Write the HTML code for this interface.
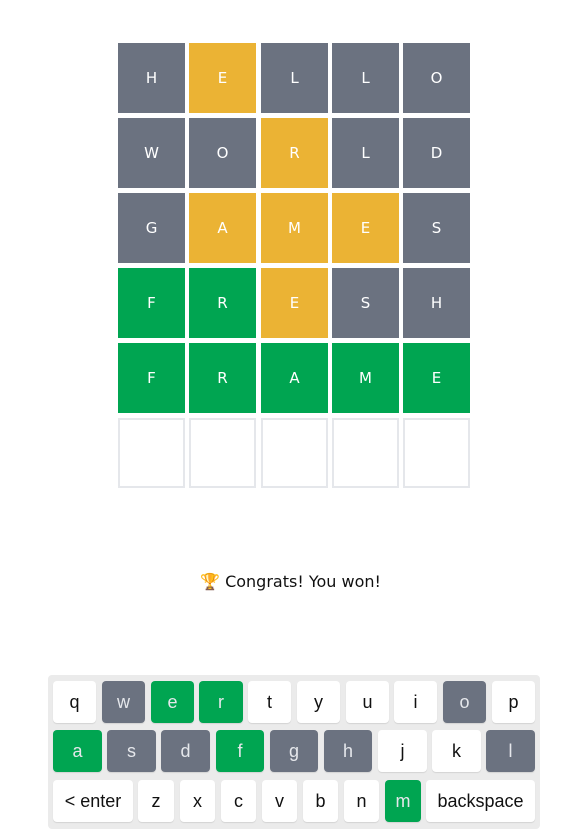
<!DOCTYPE html>
<html><head><meta charset="utf-8"><style>
body{margin:0;width:581px;height:840px;background:#fff;position:relative;font-family:"Liberation Sans","DejaVu Sans",sans-serif;overflow:hidden}
.t{position:absolute;width:67px;height:70px;display:flex;align-items:center;justify-content:center;color:#fff;font-size:15px;font-family:"DejaVu Sans",sans-serif}
.g{background:#6b7280}.y{background:#ebb334}.n{background:#00a551}.e{box-sizing:border-box;border:2px solid #e5e7eb;background:#fff}
.kb{position:absolute;left:48px;top:675px;width:492px;height:154px;background:#ebebeb;border-radius:4px}
.k{position:absolute;height:42px;background:#fff;border-radius:4px;display:flex;align-items:center;justify-content:center;font-size:18px;color:#111;box-shadow:0 1px 1px rgba(0,0,0,.1)}
.k.g{background:#6b7280;color:#e5e7eb}.k.n{background:#00a551;color:#e5e7eb}
.msg{position:absolute;top:572px;left:0;width:581px;text-align:center;font-size:16px;color:#111;font-family:"DejaVu Sans",sans-serif}
</style></head><body>
<div class="t g" style="left:118px;top:43px">H</div><div class="t y" style="left:189px;top:43px">E</div><div class="t g" style="left:261px;top:43px">L</div><div class="t g" style="left:332px;top:43px">L</div><div class="t g" style="left:403px;top:43px">O</div>
<div class="t g" style="left:118px;top:118px">W</div><div class="t g" style="left:189px;top:118px">O</div><div class="t y" style="left:261px;top:118px">R</div><div class="t g" style="left:332px;top:118px">L</div><div class="t g" style="left:403px;top:118px">D</div>
<div class="t g" style="left:118px;top:193px">G</div><div class="t y" style="left:189px;top:193px">A</div><div class="t y" style="left:261px;top:193px">M</div><div class="t y" style="left:332px;top:193px">E</div><div class="t g" style="left:403px;top:193px">S</div>
<div class="t n" style="left:118px;top:268px">F</div><div class="t n" style="left:189px;top:268px">R</div><div class="t y" style="left:261px;top:268px">E</div><div class="t g" style="left:332px;top:268px">S</div><div class="t g" style="left:403px;top:268px">H</div>
<div class="t n" style="left:118px;top:343px">F</div><div class="t n" style="left:189px;top:343px">R</div><div class="t n" style="left:261px;top:343px">A</div><div class="t n" style="left:332px;top:343px">M</div><div class="t n" style="left:403px;top:343px">E</div>
<div class="t e" style="left:118px;top:418px"></div><div class="t e" style="left:189px;top:418px"></div><div class="t e" style="left:261px;top:418px"></div><div class="t e" style="left:332px;top:418px"></div><div class="t e" style="left:403px;top:418px"></div>
<div class="msg">🏆 Congrats! You won!</div>
<div class="kb"></div>
<div class="k" style="left:53px;top:681px;width:43px">q</div><div class="k g" style="left:102px;top:681px;width:43px">w</div><div class="k n" style="left:151px;top:681px;width:43px">e</div><div class="k n" style="left:199px;top:681px;width:44px">r</div><div class="k" style="left:248px;top:681px;width:43px">t</div><div class="k" style="left:297px;top:681px;width:43px">y</div><div class="k" style="left:346px;top:681px;width:43px">u</div><div class="k" style="left:394px;top:681px;width:43px">i</div><div class="k g" style="left:443px;top:681px;width:43px">o</div><div class="k" style="left:492px;top:681px;width:43px">p</div>
<div class="k n" style="left:53px;top:730px;width:49px">a</div><div class="k g" style="left:107px;top:730px;width:49px">s</div><div class="k g" style="left:161px;top:730px;width:49px">d</div><div class="k n" style="left:216px;top:730px;width:48px">f</div><div class="k g" style="left:270px;top:730px;width:48px">g</div><div class="k g" style="left:324px;top:730px;width:48px">h</div><div class="k" style="left:378px;top:730px;width:49px">j</div><div class="k" style="left:432px;top:730px;width:49px">k</div><div class="k g" style="left:486px;top:730px;width:49px">l</div>
<div class="k" style="left:53px;top:780px;width:80px">&lt; enter</div><div class="k" style="left:138px;top:780px;width:36px">z</div><div class="k" style="left:180px;top:780px;width:35px">x</div><div class="k" style="left:221px;top:780px;width:35px">c</div><div class="k" style="left:262px;top:780px;width:35px">v</div><div class="k" style="left:303px;top:780px;width:35px">b</div><div class="k" style="left:344px;top:780px;width:35px">n</div><div class="k n" style="left:385px;top:780px;width:36px">m</div><div class="k" style="left:426px;top:780px;width:109px">backspace</div>
</body></html>
